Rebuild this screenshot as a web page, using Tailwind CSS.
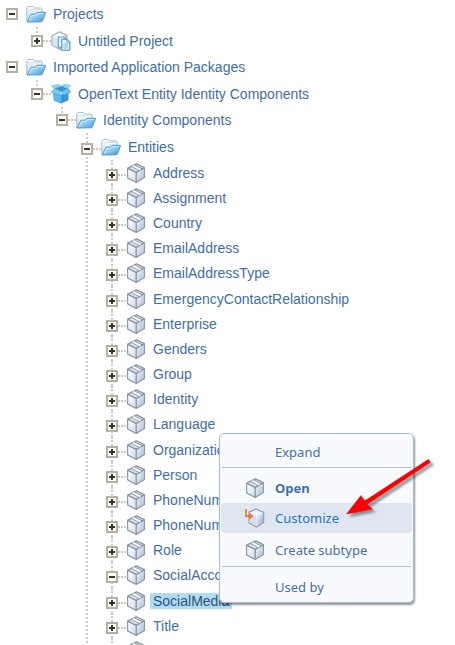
<!DOCTYPE html>
<html lang="en">
<head>
<meta charset="utf-8">
<meta name="viewport" content="width=device-width, initial-scale=1">
<title>Project explorer</title>
<script src="https://cdn.jsdelivr.net/npm/@tailwindcss/browser@4"></script>
</head>
<body class="bg-white">
<svg class="absolute size-0" aria-hidden="true">
  <defs>
    <linearGradient id="gFolder" x1="0" y1="0" x2="1" y2="1"><stop offset="0" stop-color="#d4effc"/><stop offset=".5" stop-color="#8cc9ef"/><stop offset="1" stop-color="#3f92d2"/></linearGradient>
    <linearGradient id="gPaper" x1="0" y1="0" x2="0" y2="1"><stop offset="0" stop-color="#fdfeff"/><stop offset="1" stop-color="#b9dff5"/></linearGradient>
    <linearGradient id="gSide" x1="0" y1="0" x2="1" y2="1"><stop offset="0" stop-color="#f2f6fb"/><stop offset="1" stop-color="#a9bad6"/></linearGradient>
    <linearGradient id="gFront" x1="0" y1="0" x2="1" y2="1"><stop offset="0" stop-color="#ffffff"/><stop offset="1" stop-color="#d3deeb"/></linearGradient>
    <linearGradient id="gBlue" x1="0" y1="0" x2="1" y2="1"><stop offset="0" stop-color="#ffffff"/><stop offset="1" stop-color="#8ba3d6"/></linearGradient>
    <symbol id="folder" viewBox="0 0 20 20">
      <path d="M.8 17.500V3.800L2 2.500h5.300L8.500 4H15q1 0 1 1v3L4 17.800z" fill="url(#gPaper)" stroke="#a9bcc9" stroke-width="1"/>
      <path d="M2.500 5.500H14" stroke="#d5e3ec"/>
      <path d="M1.200 18 5 10.200h4.200l1.800-1.900h8.200q.5 0 .3.700L16.300 17q-.3.800-1.200.8z" fill="url(#gFolder)" stroke="#4b99d0" stroke-width="1"/>
      <path d="M3 16.800 5.700 11.300h4l1.800-1.800h6" fill="none" stroke="#dff4ff" stroke-width=".8"/>
    </symbol>
    <symbol id="package" viewBox="0 0 20 20">
      <path d="M10.500.9 18.300 4.600V14.400L10.200 19.300 1.700 14.800V5.200z" fill="#dde4ec" stroke="#8b98a8" stroke-width="1.4" stroke-linejoin="round"/>
      <path d="M2.400 5.800 9.600 9.500v8.800l-7.200-3.900z" fill="url(#gFront)"/>
      <path d="M10.800 9.400 17.700 5.500v8.500l-6.900 4.300z" fill="url(#gSide)"/>
      <path d="M2 5.400 10.200 9.400l7.900-4.500M10.200 9.400v9.500" fill="none" stroke="#8794a5" stroke-width="1.3"/>
      <path d="M6.900 2.900 14.500 6.700" fill="none" stroke="#fbfdff" stroke-width="1.900"/>
      <path d="M5.500 3.500 13 7.500M8.700 2 16 5.700" fill="none" stroke="#8f9cac" stroke-width="1"/>
    </symbol>
    <symbol id="custom" viewBox="0 0 20 20">
      <path d="M11 1 18.600 4.400V14.400L11.500 19 4 15V4.200z" fill="#eff4fa" stroke="#93a1b1" stroke-width="1.3" stroke-linejoin="round"/>
      <path d="M11.500 8.400 18 5v9.100l-6.500 4.300z" fill="url(#gBlue)"/>
      <path d="M4.500 5 11.300 8.400v9.900l-6.800-3.700z" fill="#d5dded"/>
      <path d="M1 1v7.200h5" fill="none" stroke="#f07a1c" stroke-width="1.700"/>
      <path d="M4.200 4.700 8.500 8.200 4.200 11.700z" fill="#f07a1c"/>
    </symbol>
    <symbol id="project" viewBox="0 0 20 20">
      <path d="M8.500.8 15.800 4.400v11L9 18.500.9 14V5z" fill="url(#gSide)" stroke="#9baab8" stroke-width="1.3" stroke-linejoin="round"/>
      <path d="M1.400 5.300 8.500 8.500v9L1.400 13.800z" fill="#dbe4ed"/>
      <path d="M2 5.200 8.500 1.600l6.300 3-6.300 3.200z" fill="#f7fafc"/>
      <path d="M7.300 6h5.200l2 2v8.300H7.300z" fill="#e9f6ff" stroke="#4f9ed6" stroke-width="1.1"/>
      <path d="M10.800 8.200h5l3 3v8.100h-8z" fill="#f2faff" stroke="#3f93d0" stroke-width="1.1"/>
      <path d="M15.700 8.300v3h3M12.400 13h4.800M12.400 15h4.800M12.400 17h4.800" fill="none" stroke="#62abdc" stroke-width=".9"/>
    </symbol>
    <symbol id="openbox" viewBox="0 0 20 20">
      <path d="M2.200 8.500 10 10.500l7.500-2v7.700L10 19.600l-7.200-3z" fill="#3497d6"/>
      <path d="M2.200 8.300 10 10.600v9L3 16.600z" fill="#5cb8ea"/>
      <path d="M3.600 4.300 10 2.200l7 2-6.700 3.500z" fill="#3a90cb"/>
      <path d="M3.600 4.300 10.200 7.400 7.600 11.300.4 8.200z" fill="#7accf4" stroke="#3f9fd9" stroke-width=".6"/>
      <path d="M17 4.200 10.200 7.400l2.600 3.900 7-3.300z" fill="#6ac0ee" stroke="#3f9fd9" stroke-width=".6"/>
      <path d="M3.600 4.300.7 2 7.200.5 10 2.200zM17 4.200 19.500 1.500 13.300.4 10 2.200z" fill="#98dbf8" stroke="#4ca9dd" stroke-width=".6"/>
    </symbol>
  </defs>
</svg>

<main class="relative h-screen overflow-hidden font-['Liberation_Sans',Arial,sans-serif] text-[14px] leading-4 text-[#3f6da8]">
  <nav id="tree" aria-label="Projects" class="pt-px"></nav>

  <ul role="menu" aria-label="Node actions" class="absolute left-[219px] top-[433px] w-[195px] rounded-[5px] border border-[#a5bcd9] bg-[#f8fafd] pt-[2px] font-['Noto_Sans',Tahoma,sans-serif] text-[13px] text-[#4470a8] shadow-[1px_2px_2px_#0000006b]">
    <li role="none" class="h-[31px]"><button role="menuitem" class="flex h-full w-full items-center pl-[55px]">Expand</button></li>
    <li role="separator" class="mx-[2px] mb-1 h-px bg-[#a9c0dc]"></li>
    <li role="none" class="h-[31px]"><button role="menuitem" class="flex h-full w-full items-center gap-[10px] pl-[25px] font-bold"><svg class="size-5"><use href="#package"/></svg>Open</button></li>
    <li role="none" class="h-[31px]"><button role="menuitem" class="mx-px flex h-[30px] w-[191px] items-center gap-[10px] rounded-[4px] bg-[#dfe6f2] pl-[24px] text-[#1e74c8]"><svg class="size-5"><use href="#custom"/></svg>Customize</button></li>
    <li role="none" class="h-[31px]"><button role="menuitem" class="flex h-full w-full items-center gap-[10px] pl-[25px]"><svg class="size-5"><use href="#package"/></svg>Create subtype</button></li>
    <li role="separator" class="mx-[2px] mb-1 mt-px h-px bg-[#a9c0dc]"></li>
    <li role="none" class="h-[31px]"><button role="menuitem" class="flex h-full w-full items-center pl-[55px]">Used by</button></li>
  </ul>

  <svg class="pointer-events-none absolute left-[340px] top-[450px] h-[80px] w-[105px] drop-shadow-[3px_3px_1px_#00000060]" viewBox="0 0 105 80" aria-hidden="true">
    <path d="M6.500 64 21 45.500 24.600 51 88.500 9.300 90.500 12.300 26.900 54.500 32.500 59z" fill="#fe0000" stroke="#f00000" stroke-width=".5"/>
  </svg>
</main>

<script>
const leaves = ['Address','Assignment','Country','EmailAddress','EmailAddressType','EmergencyContactRelationship','Enterprise','Genders','Group','Identity','Language','Organization','Person','PhoneNumber','PhoneNumberType','Role','SocialAccount','SocialMedia','Title',''];
const tree = [
  {name:'Projects', icon:'folder', open:true, row:'h-[26px]', children:[
    {name:'Untitled Project', icon:'project', row:'h-[27px]'}]},
  {name:'Imported Application Packages', icon:'folder', open:true, row:'h-[26px]', children:[
    {name:'OpenText Entity Identity Components', icon:'openbox', open:true, row:'h-[27px]', children:[
      {name:'Identity Components', icon:'folder', open:true, row:'h-[26px]', children:[
        {name:'Entities', icon:'folder', open:true, low:true, more:true, row:'h-[27px]', children:
          leaves.map(name => ({name, icon:'package', low:true, more:true, row:'h-[25px]',
            open:name==='SocialAccount', selected:name==='SocialMedia'}))}]}]}]}
];
function item(n, depth) {
  const guide = depth === 0 ? '' : `<span class="absolute left-[11px] top-0 w-px border-l-2 border-dotted border-[#cfcabf] ${n.more ? 'bottom-0' : 'h-[10px]'}"></span>`;
  return `<li class="relative ${n.icon === 'package' ? 'nth-[6n+5]:pb-px' : ''}">${guide}
    <div class="relative flex items-center pl-[6px] ${n.row}">
      <button aria-label="Toggle ${n.name}" aria-expanded="${!!n.open}" class="relative size-3 shrink-0 border-2 border-[#b8b09f] bg-white ${n.low ? 'top-[2px]' : ''}">
        <span class="absolute left-px top-[3px] h-[2px] w-[6px] bg-[#333]"></span>
        ${n.open ? '' : '<span class="absolute left-[3px] top-px h-[6px] w-[2px] bg-[#333]"></span>'}
      </button>
      <span class="relative w-2 shrink-0 ${depth ? 'border-t-2 border-dotted border-[#cfcabf]' : ''} ${n.low ? 'top-[2px]' : ''}"></span>
      <svg class="size-5 shrink-0" aria-hidden="true"><use href="#${n.icon}"/></svg>
      ${n.name ? `<a href="#" class="ml-1 whitespace-nowrap px-[3px] ${n.selected ? 'bg-[#addcfa] text-[#35536f]' : ''}">${n.name}</a>` : ''}
    </div>
    ${n.children ? list(n.children, depth + 1) : ''}</li>`;
}
function list(nodes, depth) {
  return `<ul class="${depth ? 'pl-[25px]' : ''}">${nodes.map(n => item(n, depth)).join('')}</ul>`;
}
document.getElementById('tree').innerHTML = list(tree, 0);
</script>
</body>
</html>
